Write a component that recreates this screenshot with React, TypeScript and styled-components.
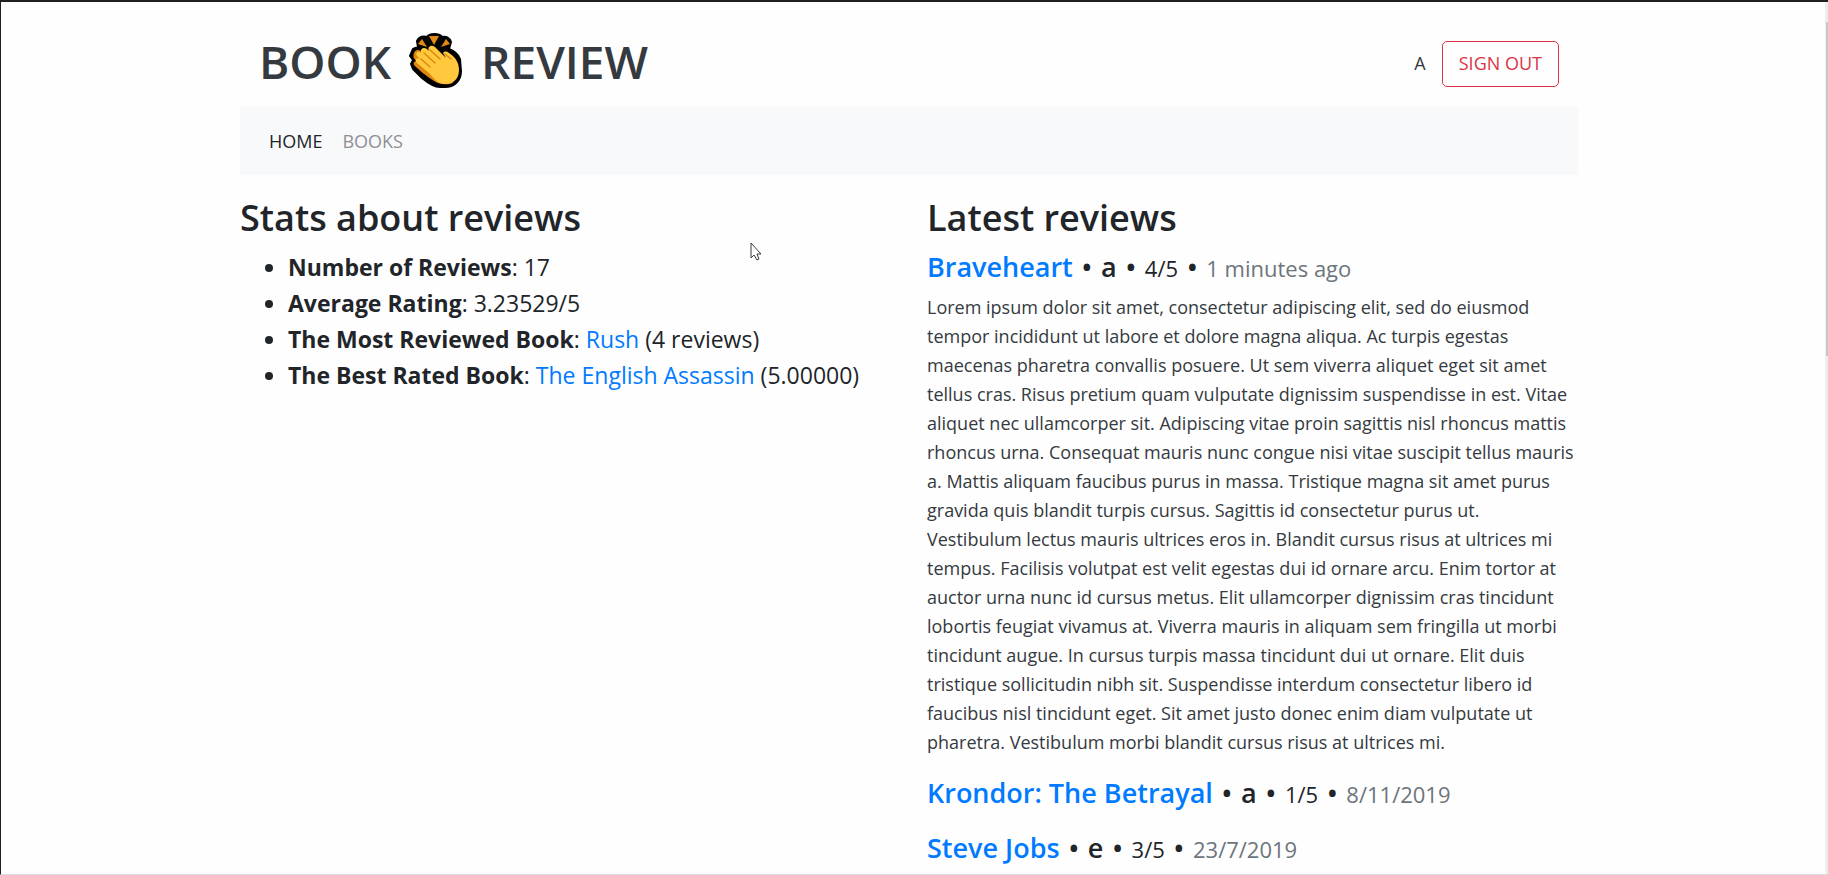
import React from "react";
import styled, { createGlobalStyle } from "styled-components";

const Global = createGlobalStyle`
  * { box-sizing: border-box; }
  body {
    margin: 0;
    background: #fefefe;
    color: #212529;
    font-family: "Segoe UI", "Open Sans", "Noto Sans", sans-serif;
    font-size: 18px;
    line-height: 29px;
  }
`;

const Window = styled.div`
  display: flex;
  height: 100vh;
  border-top: 2px solid #231f20;
  border-left: 1px solid #231f20;
  border-bottom: 1px solid #dcdcdc;
`;

const Viewport = styled.div`
  flex: 1;
  min-width: 0;
  overflow: hidden;
  padding: 0 8px 0 0;
`;

const ScrollTrack = styled.div`
  width: 3px;
  padding-top: 20px;
  background: #eeeeee;
`;

const ScrollThumb = styled.div`
  height: 334px;
  margin-left: 1px;
  background: #c8c8c8;
`;

const Container = styled.div`
  width: 100%;
  max-width: 1338px;
  margin: 0 auto;
`;

const Header = styled.header`
  display: flex;
  align-items: center;
  justify-content: space-between;
  height: 105px;
  padding: 12px 19px 0;
`;

const Brand = styled.a`
  display: flex;
  align-items: center;
  gap: 18px;
  color: #343a40;
  font-size: 46px;
  line-height: 56px;
  font-weight: 600;
  text-decoration: none;
`;

const Account = styled.div`
  display: flex;
  align-items: center;
  gap: 16px;
  padding-top: 6px;
`;

const UserName = styled.span`
  color: #343a40;
`;

const OutlineButton = styled.button`
  height: 46px;
  padding: 0 16px;
  border: 1px solid #dc3545;
  border-radius: 5px;
  background: transparent;
  color: #dc3545;
  font: inherit;
`;

const Nav = styled.nav`
  display: flex;
  align-items: center;
  gap: 20px;
  height: 68px;
  padding: 0 29px;
  background: #f8f9fb;
`;

const NavLink = styled.a<{ $active?: boolean }>`
  color: ${(p) => (p.$active ? "#212529" : "#8e9092")};
  text-decoration: none;
`;

const Columns = styled.main`
  display: grid;
  grid-template-columns: 1fr 1fr;
  gap: 36px;
  padding-top: 20px;
`;

const Heading = styled.h2`
  margin: 0 0 8px;
  font-size: 36px;
  line-height: 46px;
  font-weight: 600;
`;

const StatList = styled.ul`
  margin: 0;
  padding-left: 48px;
  font-size: 23px;
  line-height: 36px;
`;

const Label = styled.strong`
  font-weight: 700;
`;

const BookLink = styled.a`
  color: #007bff;
  text-decoration: none;
`;

const Review = styled.article`
  margin-bottom: 18px;
`;

const ReviewTitle = styled.h4`
  margin: 0;
  font-size: 27px;
  line-height: 36px;
  font-weight: 600;
`;

const Dot = styled.span`
  margin: 0 2px;
`;

const Meta = styled.small<{ $muted?: boolean }>`
  color: ${(p) => (p.$muted ? "#6c757d" : "inherit")};
  font-size: 22px;
  font-weight: 400;
`;

const ReviewText = styled.p`
  margin: 7px 0 0;
  color: #343a40;
  white-space: pre-line;
`;

const Pointer = styled.svg`
  position: fixed;
  left: 750px;
  top: 241px;
`;

const lorem = `Lorem ipsum dolor sit amet, consectetur adipiscing elit, sed do eiusmod
tempor incididunt ut labore et dolore magna aliqua. Ac turpis egestas
maecenas pharetra convallis posuere. Ut sem viverra aliquet eget sit amet
tellus cras. Risus pretium quam vulputate dignissim suspendisse in est. Vitae
aliquet nec ullamcorper sit. Adipiscing vitae proin sagittis nisl rhoncus mattis
rhoncus urna. Consequat mauris nunc congue nisi vitae suscipit tellus mauris
a. Mattis aliquam faucibus purus in massa. Tristique magna sit amet purus
gravida quis blandit turpis cursus. Sagittis id consectetur purus ut.
Vestibulum lectus mauris ultrices eros in. Blandit cursus risus at ultrices mi
tempus. Facilisis volutpat est velit egestas dui id ornare arcu. Enim tortor at
auctor urna nunc id cursus metus. Elit ullamcorper dignissim cras tincidunt
lobortis feugiat vivamus at. Viverra mauris in aliquam sem fringilla ut morbi
tincidunt augue. In cursus turpis massa tincidunt dui ut ornare. Elit duis
tristique sollicitudin nibh sit. Suspendisse interdum consectetur libero id
faucibus nisl tincidunt eget. Sit amet justo donec enim diam vulputate ut
pharetra. Vestibulum morbi blandit cursus risus at ultrices mi.`;

const reviews = [
  { book: "Braveheart", user: "a", rating: 4, when: "1 minutes ago", text: lorem },
  { book: "Krondor: The Betrayal", user: "a", rating: 1, when: "8/11/2019", text: "" },
  { book: "Steve Jobs", user: "e", rating: 3, when: "23/7/2019", text: "" },
];

const Clap = () => (
  <svg width="54" height="56" viewBox="0 0 54 56" aria-hidden="true">
    <path
      d="M9 14 L8 8 C10 4 14 3 18 4 C20 0 31 0 33 4 C37 3 41 5 42 9 L40 16 C45 18 49 21 51 26 L52 38 C52 48 45 54 36 54 L31 54 C26 54 19 50 13 45 L4 36 L2 31 L4 27 L1 23 L4 16 Z"
      fill="#000"
      stroke="#000"
      strokeWidth="2"
      strokeLinejoin="round"
    />
    <path d="M9 11 L13 6 L18 14 Z M20 3 L30 3 L25 12 Z M37 6 L41 11 L32 14 Z" fill="#e08a13" />
    <path
      d="M5 20 C6 17 9 16 12 18 L34 34 L44 50 C39 52 31 52 25 48 C17 43 9 36 5 32 C4 29 6 28 8 28 C4 26 4 23 5 20 Z"
      fill="#df8611"
    />
    <path
      d="M12 17 C14 14 17 15 19 17 L20 18 C18 14 22 11 26 14 L37 25 L34 20 C35 18 38 18 40 20 C46 24 50 29 50 37 C50 46 44 51 36 51 C29 51 26 47 21 41 L8 30 C5 27 8 24 11 26 L8 23 C6 20 9 17 12 20 Z"
      fill="#ffc83d"
    />
    <path
      d="M15 20 L26 30 M21 17 L31 26 M12 26 L21 34 M36 21 L42 26"
      fill="none"
      stroke="#df8611"
      strokeWidth="1.5"
      strokeLinecap="round"
    />
  </svg>
);

export default function App() {
  return (
    <>
      <Global />
      <Window>
        <Viewport>
          <Container>
            <Header>
              <Brand href="#">
                <span>BOOK</span>
                <Clap />
                <span>REVIEW</span>
              </Brand>
              <Account>
                <UserName>A</UserName>
                <OutlineButton type="button">SIGN OUT</OutlineButton>
              </Account>
            </Header>
            <Nav>
              <NavLink href="#home" $active>HOME</NavLink>
              <NavLink href="#books">BOOKS</NavLink>
            </Nav>
            <Columns>
              <section>
                <Heading>Stats about reviews</Heading>
                <StatList>
                  <li><Label>Number of Reviews</Label>: 17</li>
                  <li><Label>Average Rating</Label>: 3.23529/5</li>
                  <li>
                    <Label>The Most Reviewed Book</Label>: <BookLink href="#rush">Rush</BookLink> (4 reviews)
                  </li>
                  <li>
                    <Label>The Best Rated Book</Label>: <BookLink href="#assassin">The English Assassin</BookLink> (5.00000)
                  </li>
                </StatList>
              </section>
              <section>
                <Heading>Latest reviews</Heading>
                {reviews.map((r) => (
                  <Review key={r.book}>
                    <ReviewTitle>
                      <BookLink href="#book">{r.book}</BookLink> <Dot>•</Dot> {r.user} <Dot>•</Dot>{" "}
                      <Meta>{r.rating}/5</Meta> <Dot>•</Dot> <Meta $muted>{r.when}</Meta>
                    </ReviewTitle>
                    {r.text && <ReviewText>{r.text}</ReviewText>}
                  </Review>
                ))}
              </section>
            </Columns>
          </Container>
        </Viewport>
        <ScrollTrack>
          <ScrollThumb />
        </ScrollTrack>
      </Window>
      <Pointer width="13" height="21" viewBox="0 0 13 21" aria-hidden="true">
        <path d="M1 2 V17 L4 14 L7 19 L9 18 L7 13 H11 Z" fill="#fff" stroke="#3a3a48" />
      </Pointer>
    </>
  );
}
